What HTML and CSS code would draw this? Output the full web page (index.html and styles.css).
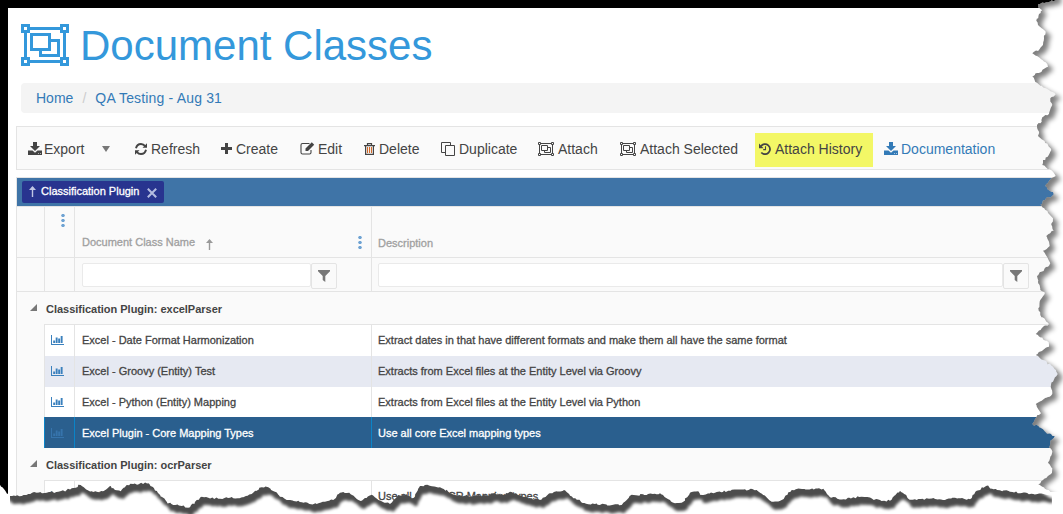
FILE: index.html
```html
<!DOCTYPE html>
<html lang="en">
<head>
<meta charset="utf-8">
<title>Document Classes</title>
<link rel="stylesheet" href="styles.css">
</head>
<body>
<svg class="defs" width="0" height="0">
  <symbol id="group" viewBox="0 0 48 42"><path fill="none" stroke="currentColor" stroke-width="3" d="M1.5 1.5h6v6h-6zM40.500 1.500h6v6h-6zM1.500 34.500h6v6h-6zM40.500 34.500h6v6h-6zM9 4.500h30M9 37.500h30M4.500 9v24M43.500 9v24M10.500 10.500h18v15h-18zM30 16.500h7.500v15h-18v-4.500"/></symbol>
  <symbol id="download" viewBox="0 0 14 13"><path fill="currentColor" fill-rule="evenodd" d="M5 0h4v4h3L7 8.900 2 4h3zM0 8.500h4.500L7 10.800l2.500-2.300H14V13H0zM10 11v.8h.8V11zM12 11v.8h.8V11z"/></symbol>
  <symbol id="refresh" viewBox="0 0 12 12"><path fill="none" stroke="currentColor" stroke-width="1.900" d="M1 5.300C1.600 2.600 3.500 1 6 1c1.900 0 3.100.8 4.200 2.200M11 6.700C10.400 9.400 8.500 11 6 11c-1.900 0-3.100-.8-4.200-2.200"/><path fill="currentColor" d="M12 .3v4.500H7.500zM0 11.700V7.200h4.500z"/></symbol>
  <symbol id="funnel" viewBox="0 0 12 12"><path fill="currentColor" d="M0 0h12v1.200L7.300 6v6L4.700 10V6L0 1.200z"/></symbol>
  <symbol id="chart" viewBox="0 0 13 10"><path fill="currentColor" d="M0 0h1v9h12v1H0zM2.200 5.500h1.900V8H2.200zM4.700 2.500h1.900V8H4.700zM7.200 3.500h1.900V8H7.200zM9.700 1h1.900v7H9.700z"/></symbol>
  <symbol id="up" viewBox="0 0 7 11"><path fill="none" stroke="currentColor" stroke-width="1.400" d="M3.500 11V1"/><path fill="currentColor" d="M3.500 0 7 4H0z"/></symbol>
</svg>
<main class="window">
  <h1 class="title"><svg class="title-icon"><use href="#group"/></svg>Document Classes</h1>
  <nav class="crumbs"><a>Home</a><span class="slash">/</span><a class="current">QA Testing - Aug 31</a></nav>
  <div class="toolbar">
    <div class="tool"><span class="slot s16"><svg class="i-dl"><use href="#download"/></svg></span>Export<i class="caret"></i></div>
    <div class="tool"><span class="slot s16"><svg class="i-12"><use href="#refresh"/></svg></span>Refresh</div>
    <div class="tool"><span class="slot s15"><svg class="i-11" viewBox="0 0 11 11"><path fill="currentColor" d="M4 0h3v4h4v3H7v4H4V7H0V4h4z"/></svg></span>Create</div>
    <div class="tool"><span class="slot s18"><svg class="i-edit" viewBox="0 0 15 13"><path fill="none" stroke="currentColor" stroke-width="1.100" d="M9.500 1.500h-7Q1 1.500 1 3v7.500Q1 12 2.500 12h7q1.500 0 1.500-1.500V8"/><path fill="currentColor" d="M11.800.3 14.200 2.700 8 9H5.500V6.600z"/></svg></span>Edit</div>
    <div class="tool"><span class="slot s15"><svg class="i-trash" viewBox="0 0 11 12"><path fill="none" stroke="currentColor" stroke-width="1.200" d="M0 2.600h11M3.500 2.500V.7h4v1.800M1.600 3v8.400h7.800V3"/><path stroke="#cf6a2b" stroke-width="1.100" d="M3.500 4v6M5.500 4v6M7.500 4v6"/></svg></span>Delete</div>
    <div class="tool"><span class="slot s18"><svg class="i-copy" viewBox="0 0 14 14"><path fill="none" stroke="currentColor" d="M4.500 3.500h9v10h-9zM4 10.500H.5V.5h9V3"/></svg></span>Duplicate</div>
    <div class="tool"><span class="slot s20"><svg class="i-group"><use href="#group"/></svg></span>Attach</div>
    <div class="tool"><span class="slot s20"><svg class="i-group"><use href="#group"/></svg></span>Attach Selected</div>
    <div class="tool marked"><span class="slot s16"><svg class="i-12" viewBox="0 0 12 12"><path fill="none" stroke="currentColor" stroke-width="1.800" d="M2 3.200A5 5 0 1 1 2.300 9.500"/><path fill="currentColor" d="M0 .6 4.600 5.200H0z"/><path fill="none" stroke="currentColor" stroke-width="1.100" d="M6.500 3.300v3.300H4.200"/></svg></span>Attach History</div>
    <div class="tool link"><span class="slot s17"><svg class="i-dl"><use href="#download"/></svg></span>Documentation</div>
  </div>
  <section class="grid">
    <div class="grouping"><span class="tag"><svg class="up"><use href="#up"/></svg>Classification Plugin<svg class="close" viewBox="0 0 10 10"><path stroke="currentColor" stroke-width="2" d="M.8.8l8.400 8.400M9.200.8.8 9.200"/></svg></span></div>
    <div class="row head">
      <div></div>
      <div class="c-menu"><i class="dots"></i></div>
      <div class="c-name">Document Class Name<svg class="up sort"><use href="#up"/></svg><i class="dots"></i></div>
      <div class="c-desc">Description</div>
    </div>
    <div class="row filters">
      <div></div><div></div>
      <div class="filter"><span class="box name-box"></span><span class="btn"><svg class="i-12"><use href="#funnel"/></svg></span></div>
      <div class="filter"><span class="box desc-box"></span><span class="btn"><svg class="i-12"><use href="#funnel"/></svg></span></div>
    </div>
    <div class="group"><i class="fold"></i>Classification Plugin: excelParser</div>
    <div class="row data first"><div></div><div><svg class="i-chart"><use href="#chart"/></svg></div><div>Excel - Date Format Harmonization</div><div>Extract dates in that have different formats and make them all have the same format</div></div>
    <div class="row data alt"><div></div><div><svg class="i-chart"><use href="#chart"/></svg></div><div>Excel - Groovy (Entity) Test</div><div>Extracts from Excel files at the Entity Level via Groovy</div></div>
    <div class="row data short"><div></div><div><svg class="i-chart"><use href="#chart"/></svg></div><div>Excel - Python (Entity) Mapping</div><div>Extracts from Excel files at the Entity Level via Python</div></div>
    <div class="row data selected"><div></div><div><svg class="i-chart"><use href="#chart"/></svg></div><div>Excel Plugin - Core Mapping Types</div><div>Use all core Excel mapping types</div></div>
    <div class="group"><i class="fold"></i>Classification Plugin: ocrParser</div>
    <div class="row data first"><div></div><div><svg class="i-chart"><use href="#chart"/></svg></div><div>OCR</div><div>Use all core OCR Mapping types</div></div>
  </section>
</main>
<svg class="torn" width="1063" height="514" viewBox="0 0 1063 514">
  <defs>
    <filter id="soft" x="-5%" y="-5%" width="110%" height="110%"><feGaussianBlur stdDeviation="1.800"/></filter>
    <filter id="softer" x="-5%" y="-5%" width="110%" height="110%"><feGaussianBlur stdDeviation="2.500"/></filter>
    <clipPath id="outside"><path id="outer-clip" clip-rule="evenodd"/></clipPath>
    <clipPath id="right-part"><path d="M1000 0h63v492h-20l-12-8H1000z"/></clipPath>
    <clipPath id="bottom-part"><path d="M10 470h1021v14l12 8h9v22H10z"/></clipPath>
  </defs>
  <path id="outer" fill="#fff" fill-rule="evenodd"/>
  <g clip-path="url(#outside)">
    <g clip-path="url(#right-part)"><path class="sheet right-shadow" filter="url(#softer)"/></g>
    <g clip-path="url(#bottom-part)"><path class="sheet bottom-shadow" filter="url(#soft)"/></g>
  </g>
</svg>
<script src="torn.js"></script>
</body>
</html>
```
FILE: styles.css
```css
* { box-sizing: border-box; }
body { margin: 0; width: 1063px; height: 514px; overflow: hidden; background: #000; font-family: "Liberation Sans", Arial, sans-serif; color: #444; }
.defs { position: absolute; }
.window { margin: 8px 0 0 8px; width: 1055px; height: 506px; background: #fff; overflow: hidden; }
.title { display: flex; align-items: center; gap: 11px; height: 75px; margin: 0; padding-left: 13px; font-size: 42px; font-weight: 400; color: #3498db; }
.title-icon { width: 48px; height: 42px; margin-top: -1px; }
.crumbs { display: flex; align-items: center; height: 30px; margin-left: 13px; padding-left: 15px; border-radius: 4px; background: #f4f4f4; font-size: 14px; color: #337ab7; }
.current { letter-spacing: .17px; }
.slash { width: 22px; text-align: center; color: #ccc; }
.toolbar { display: grid; grid-template-columns: 107px 86px 79px 64px 77px 97px 82px 135px 129px 1fr; align-items: center; height: 44px; margin: 13px 0 0 8px; padding-left: 11px; border: 1px solid #e4e4e4; border-right: 0; background: #fafafa; font-size: 14px; }
.tool { display: flex; align-items: center; height: 34px; padding-top: 1px; white-space: nowrap; }
.marked { width: 118px; margin-top: 3px; padding: 0 0 2px 4px; background: #f3f766; }
.link { color: #337ab7; }
.slot { display: flex; flex: none; }
.s15 { width: 15px; } .s16 { width: 16px; } .s17 { width: 17px; } .s18 { width: 18px; } .s20 { width: 20px; }
.i-dl { width: 14px; height: 13px; }
.i-12 { width: 12px; height: 12px; }
.i-11 { width: 11px; height: 11px; }
.i-edit { width: 15px; height: 13px; }
.i-trash { width: 11px; height: 12px; }
.i-copy { width: 14px; height: 14px; }
.i-group { width: 16px; height: 14px; }
.i-chart { width: 13px; height: 10px; color: #3a80bd; }
.caret { margin-left: 18px; border: 4px solid transparent; border-top: 6px solid #777; border-bottom: 0; }
.grid { margin: 7px 0 0 8px; border: 1px solid #e4e4e4; border-right: 0; background: #fafafa; font-size: 11px; -webkit-text-stroke: .3px currentColor; }
.grouping { display: flex; align-items: center; height: 28px; padding: 0 0 0 5px; background: #3f74a7; }
.tag { display: flex; align-items: center; width: 142px; height: 22px; padding: 0 0 3px 7px; border-radius: 2px; background: #28348f; color: #fff; }
.up { width: 7px; height: 11px; margin: 2px 5px 0 0; color: #c0c6e4; }
.close { width: 10px; height: 10px; margin: 5px 0 0 8px; color: #b4bce0; }
.row { display: grid; grid-template-columns: 27px 30px 297px 1fr; }
.row > div + div { border-left: 1px solid #e4e4e4; }
.head { height: 51px; border-top: 1px solid #e4e4e4; color: #a0a0a0; }
.dots { width: 4px; height: 14px; background: radial-gradient(circle, #6fa3d3 1.400px, transparent 2px) 0 0 / 4px 5px; }
.c-menu { display: flex; padding: 6px 0 0 16px; }
.c-name { display: flex; align-items: center; padding: 20px 9px 0 7px; }
.c-name .dots { margin: 0 0 0 auto; }
.sort { margin: 4px 0 0 11px; color: #999; }
.c-desc { display: flex; align-items: center; padding: 22px 0 0 6px; }
.filters { height: 35px; border-top: 1px solid #e4e4e4; border-bottom: 1px solid #e4e4e4; }
.filter { display: flex; padding: 5px 0 0 7px; }
.row > .filter:last-child { padding-left: 6px; }
.box { height: 24px; border: 1px solid #eaeaea; border-radius: 2px; background: #fff; }
.name-box { width: 229px; }
.desc-box { width: 625px; }
.btn { display: flex; align-items: center; justify-content: center; width: 26px; height: 26px; border: 1px solid #e4e4e4; border-radius: 2px; color: #777; }
.group { display: flex; align-items: center; height: 32px; padding: 1px 0 0 13px; font-weight: 700; letter-spacing: -.02px; -webkit-text-stroke: 0; }
.fold { margin: -3px 9px 0 0; border-left: 7px solid transparent; border-bottom: 7px solid #777; }
.data { height: 31px; }
.data > div { display: flex; align-items: center; padding: 0 0 2px 6px; }
.data > div:nth-child(3) { padding-left: 7px; }
.data > div + div { background: #fff; }
.data.first { height: 32px; }
.data.short { height: 30px; }
.data.short > div { padding-bottom: 1px; }
.data.selected > div { padding-bottom: 0; }
.data.first > div + div { border-top: 1px solid #e4e4e4; }
.data.alt > div + div { background: #e6e9f2; }
.data.selected > div + div { background: #2a5f8e; border-left-color: #0a84c8; color: #fff; }
.selected .i-chart { color: #3674ac; }
.torn { position: absolute; left: 0; top: 0; }
.right-shadow { fill: #000; opacity: .5; transform: translate(5px, 4px); }
.bottom-shadow { fill: #000; opacity: .7; transform: translate(3px, 8px); }
```
FILE: torn.js
```js
// Corner points of the ragged sheet, in thirds of a pixel relative to each strip's origin.
const strips = [
  [963, 0, [279,0,225,12,225,22,238,30,228,42,220,62,225,75,236,85,248,95,243,115,240,135,230,147,208,160,248,187,255,200,208,230,222,248,240,262,278,283,262,295,268,315,262,328,258,342,238,352,236,365,222,375,228,395,225,408,240,420,255,435,265,450,254,470,240,480,238,495,270,515,278,528,265,535,247,558,272,583,246,600,232,614,244,625,258,642,270,655,265,675,272,692,250,708,258,725,260,738,240,752]],
  [963, 250, [252,20,262,40,245,55,235,65,222,78,225,95,232,120,246,128,232,150,226,175,232,195,258,222,236,235,218,252,257,277,258,290,230,305,218,315,240,330,270,350,284,372,270,395,264,405,268,432,250,443,236,452,218,462,226,478,234,490,220,502,208,522,240,538,248,547,275,558,262,572,258,592,268,604,262,620,255,637,268,655,264,672,240,690,226,703,262,725]],
  [700, 400, [1050,284,1000,282,930,275,880,268,860,257,830,272,810,298,765,293,735,300,700,294,650,300,625,296,600,272,570,302,540,300,485,290,430,298,390,292,370,266,300,266,275,270,245,300,215,305,190,285,170,270,135,268,85,272,40,280,0,284]],
  [340, 400, [1075,274,1050,278,1030,305,1005,310,985,298,960,280,920,285,875,284,845,315,745,313,700,295,672,270,630,280,600,300,570,294,545,288,510,275,490,285,460,280,450,284,400,288,345,285,325,275,300,262,262,254,240,258,225,290,215,295,200,283,175,285,150,312,115,300,95,284,62,303,45,292,28,278,10,276]],
  [0, 270, [1020,668,1000,690,975,695,950,702,910,698,895,692,865,690,840,680,825,665,805,652,785,652,755,672,730,682,690,683,660,686,625,683,605,680,590,690,570,712,545,708,520,705,500,695,462,655,445,640,400,642,380,645,362,664,345,660,332,648,308,664,275,664,262,660,242,645,215,655,200,660,175,665,140,668,110,668,85,672,65,678,30,678,0,644]]
];
const points = [];
for (const [ox, oy, list] of strips)
  for (let i = 0; i < list.length; i += 2) points.push([ox + list[i] / 3, oy + list[i + 1] / 3]);

let seed = 7;
const rand = () => (seed = (seed * 16807) % 2147483647) / 2147483647 - 0.5;
const edge = [points[0]];
for (let i = 1; i < points.length; i++) {
  const [ax, ay] = points[i - 1], [bx, by] = points[i];
  const n = Math.max(1, Math.round(Math.hypot(bx - ax, by - ay) / 2));
  for (let k = 1; k < n; k++)
    edge.push([ax + (bx - ax) * k / n + rand() * 1.4, ay + (by - ay) * k / n + rand() * 2]);
  edge.push([bx, by]);
}
const line = edge.map(p => p[0].toFixed(1) + ' ' + p[1].toFixed(1)).join('L');
const sheet = 'M-30 -30L1056 -30L' + line + 'L-30 455Z';
const outer = 'M-40 -40H1100V560H-40Z' + sheet;
document.getElementById('outer').setAttribute('d', outer);
document.getElementById('outer-clip').setAttribute('d', outer);
document.querySelectorAll('.sheet').forEach(p => p.setAttribute('d', sheet));
```
